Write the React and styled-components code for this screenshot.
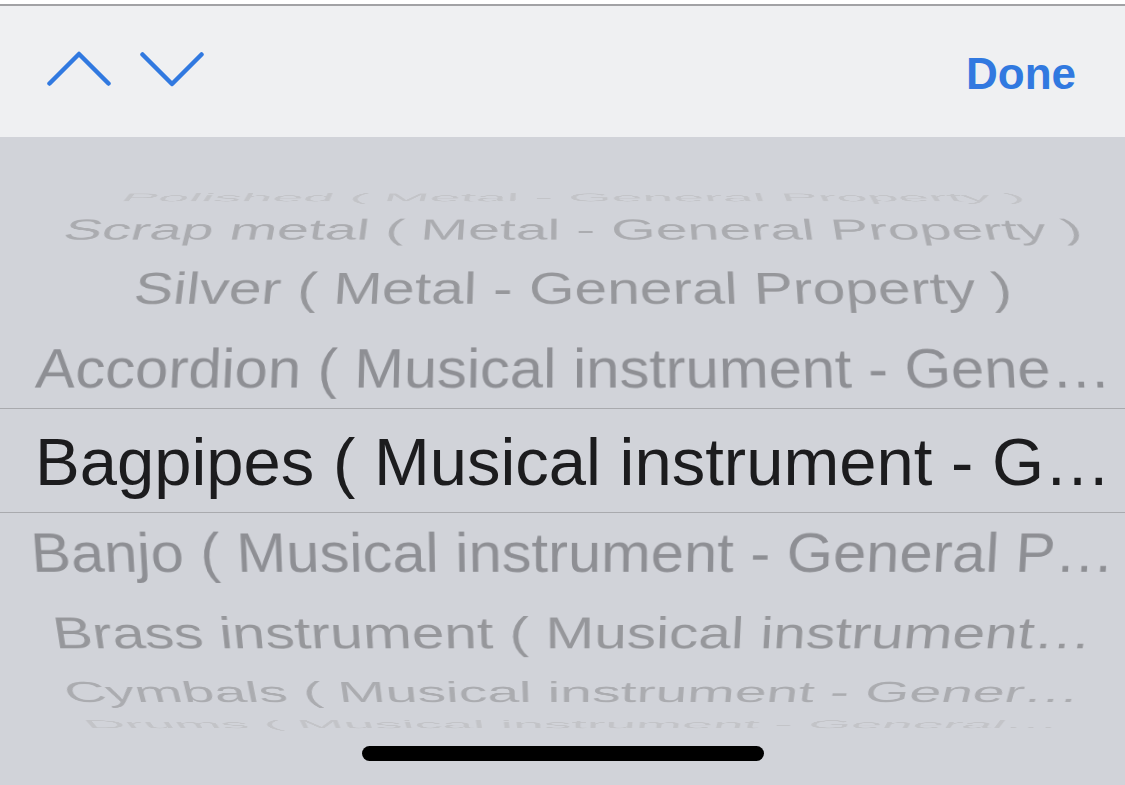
import React from "react";
import styled, { createGlobalStyle } from "styled-components";

const GlobalStyle = createGlobalStyle`
  html, body {
    margin: 0;
    padding: 0;
    background: #ffffff;
  }
  body {
    font-family: "Liberation Sans", Arial, sans-serif;
    -webkit-font-smoothing: antialiased;
  }
`;

// rows of the wheel, index = distance from the selected row
const rows = [
  { k: -4, label: "Polished ( Metal - General Property )" },
  { k: -3, label: "Scrap metal ( Metal - General Property )" },
  { k: -2, label: "Silver ( Metal - General Property )" },
  { k: -1, label: "Accordion ( Musical instrument - Gene\u2026" },
  { k: 1, label: "Banjo ( Musical instrument - General P\u2026" },
  { k: 2, label: "Brass instrument ( Musical instrument\u2026" },
  { k: 3, label: "Cymbals ( Musical instrument - Gener\u2026" },
  { k: 4, label: "Drums ( Musical instrument - General\u2026" },
];

const fade = ["#1c1c1e", "#8e8f94", "#96979b", "#abacb0", "#c3c4c8"];

const STEP = 18;
const RADIUS = 300;

const Chevron = ({ dir }) => (
  <svg width="64" height="36" viewBox="0 0 64 36">
    <polyline
      points={dir === "up" ? "2.5,32.5 32,3 61.5,32.5" : "2.5,3.5 32,33 61.5,3.5"}
      fill="none"
      stroke="#3179e0"
      strokeWidth="4.5"
      strokeLinecap="round"
      strokeLinejoin="round"
    />
  </svg>
);

const PickerSheet = () => {
  return (
    <Screen>
      <TopEdge />
      <Toolbar>
        <Arrows>
          <ArrowButton aria-label="Previous">
            <Chevron dir="up" />
          </ArrowButton>
          <ArrowButton aria-label="Next">
            <Chevron dir="down" />
          </ArrowButton>
        </Arrows>
        <DoneButton>Done</DoneButton>
      </Toolbar>
      <Picker>
        <Wheel>
          {rows.map((row) => (
            <WheelRow key={row.k} $angle={-row.k * STEP} $color={fade[Math.abs(row.k)]}>
              {row.label}
            </WheelRow>
          ))}
          <Band>
            <Selected>Bagpipes ( Musical instrument - G{"\u2026"}</Selected>
          </Band>
        </Wheel>
        <HomeIndicator />
      </Picker>
    </Screen>
  );
};

export default function App() {
  return (
    <>
      <GlobalStyle />
      <PickerSheet />
    </>
  );
}

const Screen = styled.div`
  width: 1125px;
  height: 785px;
  display: flex;
  flex-direction: column;
  overflow: hidden;
`;

const TopEdge = styled.div`
  height: 4px;
  background: #ffffff;
  border-bottom: 2px solid #a2a2a5;
  flex-shrink: 0;
`;

const Toolbar = styled.div`
  height: 131px;
  flex-shrink: 0;
  background: #eff0f2;
  display: flex;
  align-items: center;
  justify-content: space-between;
  padding: 0 49px 0 47px;
`;

const Arrows = styled.div`
  display: flex;
  gap: 29px;
  margin-top: -5px;
`;

const ArrowButton = styled.button`
  border: none;
  background: transparent;
  padding: 0;
  display: flex;
  cursor: pointer;
`;

const DoneButton = styled.button`
  border: none;
  background: transparent;
  padding: 0;
  margin-top: 5px;
  font-family: "Liberation Sans", Arial, sans-serif;
  font-weight: 700;
  font-size: 44px;
  line-height: 1;
  color: #3179e0;
  cursor: pointer;
`;

const Picker = styled.div`
  flex: 1;
  position: relative;
  background: #d1d3d9;
  overflow: hidden;
  display: flex;
`;

const Wheel = styled.div`
  flex: 1;
  display: grid;
  grid-template: 1fr / 1fr;
  perspective: 2500px;
  perspective-origin: 573px 50%;
`;

const WheelRow = styled.div`
  grid-area: 1 / 1;
  align-self: center;
  padding-left: 21px;
  height: 60px;
  font-size: 60px;
  line-height: 60px;
  text-align: center;
  white-space: nowrap;
  color: ${(p) => p.$color};
  backface-visibility: hidden;
  transform: translateZ(-${RADIUS}px) rotateX(${(p) => p.$angle}deg) translateZ(${RADIUS}px);
`;

const Band = styled.div`
  grid-area: 1 / 1;
  align-self: center;
  position: relative;
  z-index: 1;
  height: 101px;
  margin-top: -1px;
  border-top: 1.5px solid #a9aaae;
  border-bottom: 1.5px solid #a9aaae;
  display: flex;
  align-items: center;
  justify-content: center;
  padding: 2px 0 0 21px;
`;

const Selected = styled.div`
  font-size: 67px;
  line-height: 1;
  white-space: nowrap;
  color: ${fade[0]};
`;

const HomeIndicator = styled.div`
  position: absolute;
  left: 50%;
  bottom: 24px;
  width: 402px;
  height: 15px;
  margin-left: -201px;
  border-radius: 8px;
  background: #000000;
`;
